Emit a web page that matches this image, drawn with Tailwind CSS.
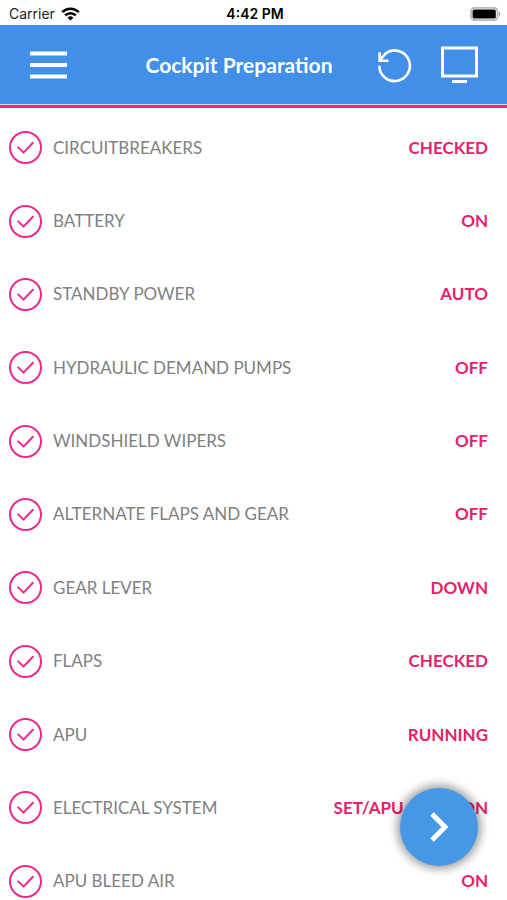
<!DOCTYPE html>
<html lang="en">
<head>
  <meta charset="UTF-8">
  <meta name="viewport" content="width=device-width, initial-scale=1.0">
  <title>Cockpit Preparation</title>
  <script src="https://cdn.jsdelivr.net/npm/@tailwindcss/browser@4"></script>
</head>
<body class="bg-white font-['Lato',sans-serif] h-screen flex flex-col overflow-hidden">
  <!-- Status bar -->
  <div class="grid grid-cols-3 items-center h-[25px] pl-[9px] pr-1.5 pt-0.5 shrink-0 text-sm leading-none text-[#222] font-['Inter',sans-serif]">
    <div class="flex items-center gap-1.5">
      <span>Carrier</span>
      <svg class="w-[19px] h-[14px]" viewBox="0 0 19 14" fill="none" stroke="#000" stroke-width="2.6">
        <path d="M1.2 5.2a11.8 11.8 0 0 1 16.6 0"/>
        <path d="M4.2 8.4a7.6 7.6 0 0 1 10.6 0"/>
        <path d="M9.5 13.6 6.6 10.7a4.2 4.2 0 0 1 5.8 0z" fill="#000" stroke="none"/>
      </svg>
    </div>
    <span class="text-center font-semibold text-black">4:42 PM</span>
    <svg class="w-[31px] h-[14px] justify-self-end" viewBox="0 0 31 14">
      <rect x="1" y="0.9" width="26.5" height="12.2" rx="3.6" fill="#fff" stroke="#b8b8b8" stroke-width="1.8"/>
      <rect x="2.6" y="2.4" width="23.2" height="9.2" rx="1.6" fill="#000"/>
      <path d="M28.8 4.5c2 .8 2 4.2 0 5z" fill="#aaa"/>
    </svg>
  </div>

  <!-- Header -->
  <header class="shrink-0 bg-[#418fe8] border-b-3 border-[#ea2a72]">
    <div class="flex items-center h-20 pl-[30px] pr-[29px] text-white border-b border-[#d5d5f4]">
      <button type="button" aria-label="Menu">
        <svg class="w-[37px] h-7 block" viewBox="0 0 37 28" stroke="#fff" stroke-width="4">
          <path d="M0 2.5h37M0 14h37M0 25.5h37"/>
        </svg>
      </button>
      <h1 class="flex-1 ml-[34px] text-center text-[21px] leading-7 font-bold">Cockpit Preparation</h1>
      <div class="flex items-center gap-7">
        <button type="button" aria-label="Reset">
          <svg class="w-9 h-9 block" viewBox="0 0 36 36" fill="none" stroke="#fff" stroke-width="2.6">
            <path d="M2.3 18.8A15.3 15.3 0 1 0 8.6 6.4L3 12.8"/>
            <path d="M2.6 5.2v8.6h8.8"/>
          </svg>
        </button>
        <button type="button" aria-label="Display">
          <svg class="w-[37px] h-[37px] block" viewBox="0 0 37 37" fill="none" stroke="#fff" stroke-width="3">
            <path d="M1.5 2h34v28h-34zM11 35.5h15"/>
          </svg>
        </button>
      </div>
    </div>
  </header>

  <svg class="hidden">
    <symbol id="check" viewBox="0 0 33 33">
      <circle cx="16.5" cy="16.5" r="15.5"/>
      <path d="m9.2 16.4 5.3 5.2 9.4-9.8" stroke-linecap="round" stroke-linejoin="round"/>
    </symbol>
  </svg>

  <!-- Checklist -->
  <main class="flex-1 min-h-0 overflow-y-auto pt-[3px] [scrollbar-width:none]">
    <ul class="grid grid-rows-11 min-h-[807px] pl-[9px] pr-[19px] text-[17px] leading-6 text-[#808080]">
      <li class="flex items-center gap-[11px]">
        <svg class="size-[33px] shrink-0 fill-none stroke-[#ec2a8b] stroke-2"><use href="#check"/></svg>
        <span class="flex-1">CIRCUITBREAKERS</span>
        <span class="font-bold text-[#e6216b]">CHECKED</span>
      </li>
      <li class="flex items-center gap-[11px]">
        <svg class="size-[33px] shrink-0 fill-none stroke-[#ec2a8b] stroke-2"><use href="#check"/></svg>
        <span class="flex-1">BATTERY</span>
        <span class="font-bold text-[#e6216b]">ON</span>
      </li>
      <li class="flex items-center gap-[11px]">
        <svg class="size-[33px] shrink-0 fill-none stroke-[#ec2a8b] stroke-2"><use href="#check"/></svg>
        <span class="flex-1">STANDBY POWER</span>
        <span class="font-bold text-[#e6216b]">AUTO</span>
      </li>
      <li class="flex items-center gap-[11px]">
        <svg class="size-[33px] shrink-0 fill-none stroke-[#ec2a8b] stroke-2"><use href="#check"/></svg>
        <span class="flex-1">HYDRAULIC DEMAND PUMPS</span>
        <span class="font-bold text-[#e6216b]">OFF</span>
      </li>
      <li class="flex items-center gap-[11px]">
        <svg class="size-[33px] shrink-0 fill-none stroke-[#ec2a8b] stroke-2"><use href="#check"/></svg>
        <span class="flex-1">WINDSHIELD WIPERS</span>
        <span class="font-bold text-[#e6216b]">OFF</span>
      </li>
      <li class="flex items-center gap-[11px]">
        <svg class="size-[33px] shrink-0 fill-none stroke-[#ec2a8b] stroke-2"><use href="#check"/></svg>
        <span class="flex-1">ALTERNATE FLAPS AND GEAR</span>
        <span class="font-bold text-[#e6216b]">OFF</span>
      </li>
      <li class="flex items-center gap-[11px]">
        <svg class="size-[33px] shrink-0 fill-none stroke-[#ec2a8b] stroke-2"><use href="#check"/></svg>
        <span class="flex-1">GEAR LEVER</span>
        <span class="font-bold text-[#e6216b]">DOWN</span>
      </li>
      <li class="flex items-center gap-[11px]">
        <svg class="size-[33px] shrink-0 fill-none stroke-[#ec2a8b] stroke-2"><use href="#check"/></svg>
        <span class="flex-1">FLAPS</span>
        <span class="font-bold text-[#e6216b]">CHECKED</span>
      </li>
      <li class="flex items-center gap-[11px]">
        <svg class="size-[33px] shrink-0 fill-none stroke-[#ec2a8b] stroke-2"><use href="#check"/></svg>
        <span class="flex-1">APU</span>
        <span class="font-bold text-[#e6216b]">RUNNING</span>
      </li>
      <li class="flex items-center gap-[11px]">
        <svg class="size-[33px] shrink-0 fill-none stroke-[#ec2a8b] stroke-2"><use href="#check"/></svg>
        <span class="flex-1">ELECTRICAL SYSTEM</span>
        <span class="font-bold text-[#e6216b]">SET/APU GEN 1 ON</span>
      </li>
      <li class="flex items-center gap-[11px]">
        <svg class="size-[33px] shrink-0 fill-none stroke-[#ec2a8b] stroke-2"><use href="#check"/></svg>
        <span class="flex-1">APU BLEED AIR</span>
        <span class="font-bold text-[#e6216b]">ON</span>
      </li>
    </ul>
  </main>

  <!-- Next checklist -->
  <button type="button" aria-label="Next" class="fixed right-[29px] bottom-[34px] size-[78px] rounded-full bg-[#4698e6] shadow-[0_0_10px_3px_rgba(0,0,0,0.4)] flex items-center justify-center">
    <svg class="w-5 h-8" viewBox="0 0 20 32" fill="none" stroke="#fff" stroke-width="5">
      <path d="m3 3 13 13L3 29"/>
    </svg>
  </button>
</body>
</html>
